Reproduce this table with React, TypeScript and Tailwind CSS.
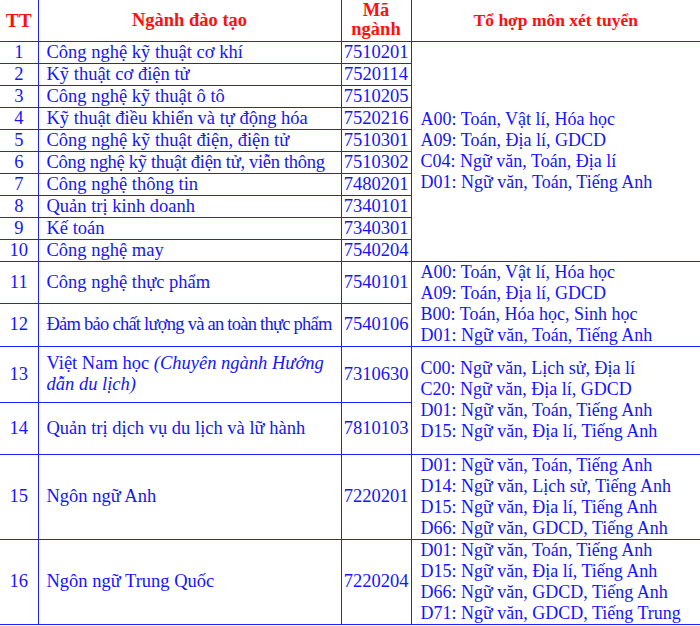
import React from "react";

type Row = { tt: string; name: React.ReactNode; code: string; h: string; tr?: string };

const B = "border-[#1f1fff]";

const rows1: Row[] = [
  { tt: "1", name: "Công nghệ kỹ thuật cơ khí", code: "7510201", h: "h-[22px]" },
  { tt: "2", name: "Kỹ thuật cơ điện tử", code: "7520114", h: "h-[22px]" },
  { tt: "3", name: "Công nghệ kỹ thuật ô tô", code: "7510205", h: "h-[22px]" },
  { tt: "4", name: "Kỹ thuật điều khiển và tự động hóa", code: "7520216", h: "h-[22px]" },
  { tt: "5", name: "Công nghệ kỹ thuật điện, điện tử", code: "7510301", h: "h-[22px]" },
  { tt: "6", name: "Công nghệ kỹ thuật điện tử, viễn thông", code: "7510302", h: "h-[22px]", tr: "tracking-[-0.3px]" },
  { tt: "7", name: "Công nghệ thông tin", code: "7480201", h: "h-[22px]" },
  { tt: "8", name: "Quản trị kinh doanh", code: "7340101", h: "h-[22px]" },
  { tt: "9", name: "Kế toán", code: "7340301", h: "h-[22px]" },
  { tt: "10", name: "Công nghệ may", code: "7540204", h: "h-[22px]" },
];

function Lines({ items }: { items: string[] }) {
  return (
    <div className="flex flex-col leading-[21px] text-[18px]">
      {items.map((t) => (
        <div key={t} className="whitespace-nowrap">{t}</div>
      ))}
    </div>
  );
}

export default function App() {
  const td = `border ${B} p-0 align-middle`;
  const ttc = `${td} border-l-0 text-center`;
  const namec = `${td} pl-[8px] pr-[2px] whitespace-nowrap overflow-hidden`;
  const codec = `${td} text-center whitespace-nowrap overflow-hidden`;
  const combc = `${td} border-r-0 pl-[9px]`;
  return (
    <div
      className="w-[700px] h-[626px] bg-white overflow-hidden text-[#1414ff] text-[18.5px] leading-[21px]"
      style={{ fontFamily: '"Liberation Serif", "Times New Roman", serif' }}
    >
      <table className="table-fixed border-collapse w-[700px]">
        <colgroup>
          <col className="w-[38px]" />
          <col className="w-[303px]" />
          <col className="w-[70px]" />
          <col className="w-[289px]" />
        </colgroup>
        <thead>
          <tr className="h-[41px] text-[#ff1010] font-bold">
            <th className={`${td} border-t-0 border-l-0 text-center text-[19.5px]`}>TT</th>
            <th className={`${td} border-t-0 text-center`}>Ngành đào tạo</th>
            <th className={`${td} border-t-0 text-center leading-[19px]`}>
              Mã
              <br />
              ngành
            </th>
            <th className={`${td} border-t-0 border-r-0 text-center text-[17.5px]`}>Tổ hợp môn xét tuyển</th>
          </tr>
        </thead>
        <tbody>
          {rows1.map((r, i) => (
            <tr key={r.tt} className={r.h}>
              <td className={ttc}>{r.tt}</td>
              <td className={`${namec} ${r.tr ?? ""}`}>{r.name}</td>
              <td className={codec}>{r.code}</td>
              {i === 0 && (
                <td className={combc} rowSpan={10}>
                  <Lines
                    items={[
                      "A00: Toán, Vật lí, Hóa học",
                      "A09: Toán, Địa lí, GDCD",
                      "C04: Ngữ văn, Toán, Địa lí",
                      "D01: Ngữ văn, Toán, Tiếng Anh",
                    ]}
                  />
                </td>
              )}
            </tr>
          ))}
          <tr className="h-[42px]">
            <td className={ttc}>11</td>
            <td className={namec}>Công nghệ thực phẩm</td>
            <td className={codec}>7540101</td>
            <td className={combc} rowSpan={2}>
              <Lines
                items={[
                  "A00: Toán, Vật lí, Hóa học",
                  "A09: Toán, Địa lí, GDCD",
                  "B00: Toán, Hóa học, Sinh học",
                  "D01: Ngữ văn, Toán, Tiếng Anh",
                ]}
              />
            </td>
          </tr>
          <tr className="h-[43px]">
            <td className={ttc}>12</td>
            <td className={`${namec} tracking-[-0.75px]`}>Đảm bảo chất lượng và an toàn thực phẩm</td>
            <td className={codec}>7540106</td>
          </tr>
          <tr className="h-[56px]">
            <td className={ttc}>13</td>
            <td className={`${td} pl-[8px] pr-[2px]`}>
              Việt Nam học <i>(Chuyên ngành Hướng dẫn du lịch)</i>
            </td>
            <td className={codec}>7310630</td>
            <td className={combc} rowSpan={2}>
              <Lines
                items={[
                  "C00: Ngữ văn, Lịch sử, Địa lí",
                  "C20: Ngữ văn, Địa lí, GDCD",
                  "D01: Ngữ văn, Toán, Tiếng Anh",
                  "D15: Ngữ văn, Địa lí, Tiếng Anh",
                ]}
              />
            </td>
          </tr>
          <tr className="h-[52px]">
            <td className={ttc}>14</td>
            <td className={namec}>Quản trị dịch vụ du lịch và lữ hành</td>
            <td className={codec}>7810103</td>
          </tr>
          <tr className="h-[85px]">
            <td className={ttc}>15</td>
            <td className={namec}>Ngôn ngữ Anh</td>
            <td className={codec}>7220201</td>
            <td className={combc}>
              <Lines
                items={[
                  "D01: Ngữ văn, Toán, Tiếng Anh",
                  "D14: Ngữ văn, Lịch sử, Tiếng Anh",
                  "D15: Ngữ văn, Địa lí, Tiếng Anh",
                  "D66: Ngữ văn, GDCD, Tiếng Anh",
                ]}
              />
            </td>
          </tr>
          <tr className="h-[85px]">
            <td className={ttc}>16</td>
            <td className={namec}>Ngôn ngữ Trung Quốc</td>
            <td className={codec}>7220204</td>
            <td className={combc}>
              <Lines
                items={[
                  "D01: Ngữ văn, Toán, Tiếng Anh",
                  "D15: Ngữ văn, Địa lí, Tiếng Anh",
                  "D66: Ngữ văn, GDCD, Tiếng Anh",
                  "D71: Ngữ văn, GDCD, Tiếng Trung",
                ]}
              />
            </td>
          </tr>
        </tbody>
      </table>
    </div>
  );
}
